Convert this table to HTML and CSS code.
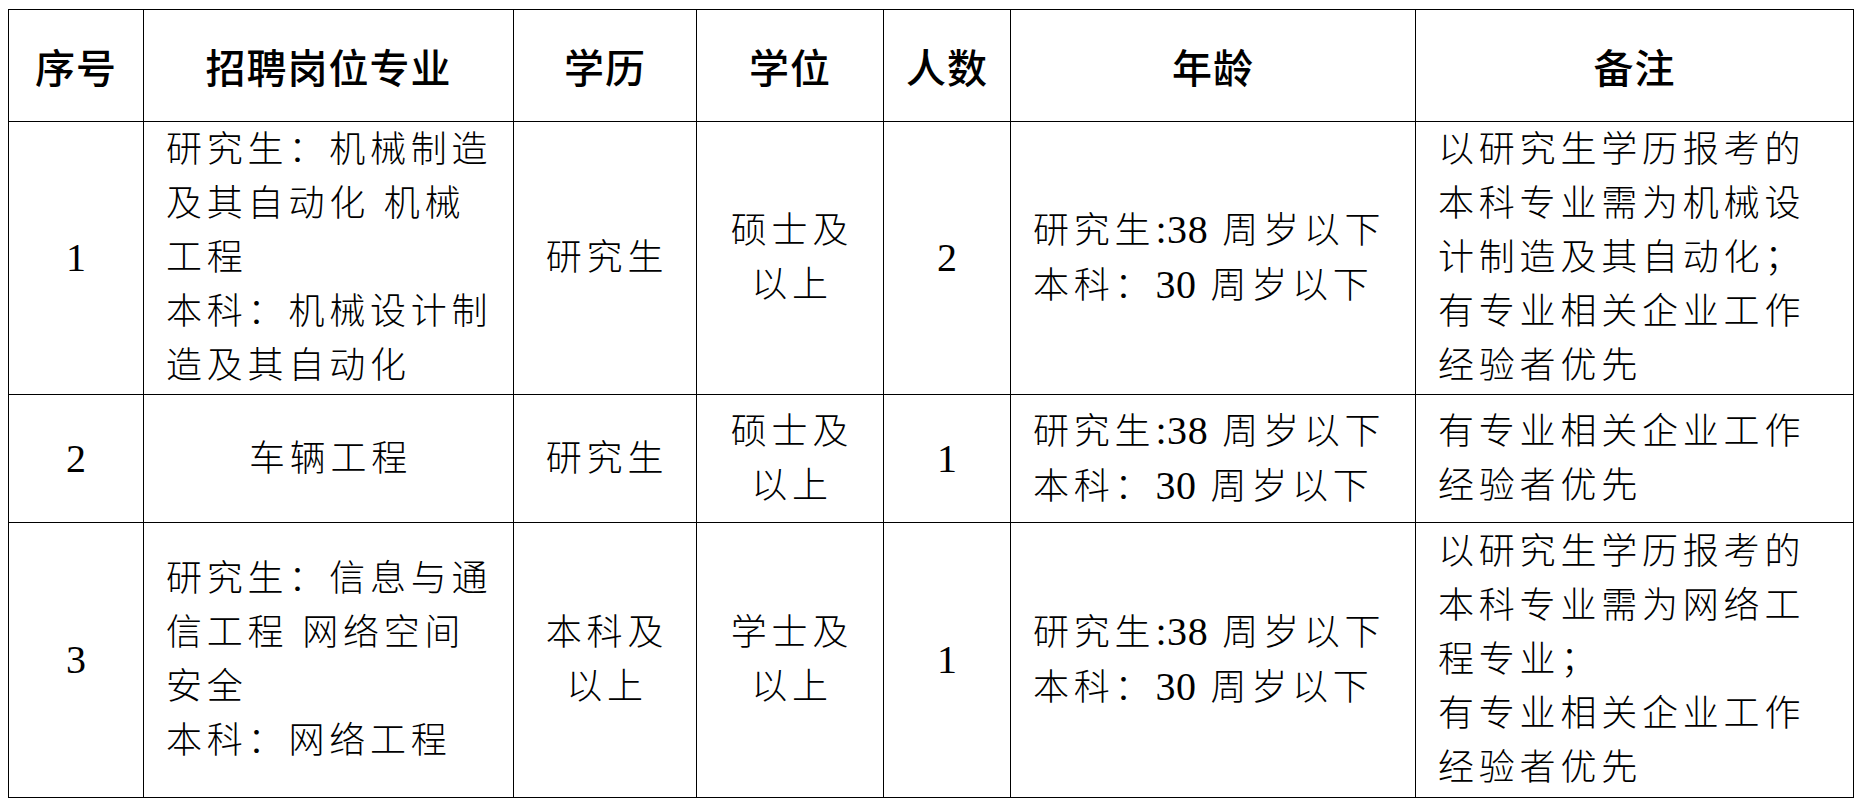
FILE: index.html
```html
<!DOCTYPE html>
<html lang="zh-CN">
<head>
<meta charset="utf-8">
<title>招聘岗位</title>
<link rel="stylesheet" href="styles.css">
</head>
<body>
<table class="grid">
  <colgroup>
    <col class="c1"><col class="c2"><col class="c3"><col class="c4"><col class="c5"><col class="c6"><col class="c7">
  </colgroup>
  <thead>
    <tr class="head">
      <th>序号</th><th>招聘岗位专业</th><th>学历</th><th>学位</th><th>人数</th><th>年龄</th><th>备注</th>
    </tr>
  </thead>
  <tbody>
    <tr class="r1">
      <td class="num">1</td>
      <td class="left">研究生：机械制造<br>及其自动化 机械<br>工程<br>本科：机械设计制<br>造及其自动化</td>
      <td class="center">研究生</td>
      <td class="center">硕士及<br>以上</td>
      <td class="num">2</td>
      <td class="left">研究生<span class="lat">:38</span> 周岁以下<br>本科：<span class="lat">30</span> 周岁以下</td>
      <td class="left">以研究生学历报考的<br>本科专业需为机械设<br>计制造及其自动化；<br>有专业相关企业工作<br>经验者优先</td>
    </tr>
    <tr class="r2">
      <td class="num">2</td>
      <td class="center">车辆工程</td>
      <td class="center">研究生</td>
      <td class="center">硕士及<br>以上</td>
      <td class="num">1</td>
      <td class="left">研究生<span class="lat">:38</span> 周岁以下<br>本科：<span class="lat">30</span> 周岁以下</td>
      <td class="left">有专业相关企业工作<br>经验者优先</td>
    </tr>
    <tr class="r3">
      <td class="num">3</td>
      <td class="left">研究生：信息与通<br>信工程 网络空间<br>安全<br>本科：网络工程</td>
      <td class="center">本科及<br>以上</td>
      <td class="center">学士及<br>以上</td>
      <td class="num">1</td>
      <td class="left">研究生<span class="lat">:38</span> 周岁以下<br>本科：<span class="lat">30</span> 周岁以下</td>
      <td class="left">以研究生学历报考的<br>本科专业需为网络工<br>程专业；<br>有专业相关企业工作<br>经验者优先</td>
    </tr>
  </tbody>
</table>
</body>
</html>
```
FILE: styles.css
```css
html, body {
  margin: 0;
  padding: 0;
  background: #ffffff;
}
body {
  padding: 9px 0 0 8px;
  color: #000;
}
.grid {
  border-collapse: collapse;
  table-layout: fixed;
  width: 1845px;
}
.grid th, .grid td {
  border: 1.5px solid #000;
  padding: 0;
  vertical-align: middle;
  white-space: nowrap;
  overflow: hidden;
}
.c1 { width: 135px; }
.c2 { width: 370px; }
.c3 { width: 183px; }
.c4 { width: 187px; }
.c5 { width: 127px; }
.c6 { width: 405px; }
.c7 { width: 438px; }

.head { height: 112px; }
.r1 { height: 273px; }
.r2 { height: 128px; }
.r3 { height: 275px; }

.grid th {
  font-family: "Noto Sans CJK SC", "Noto Sans", sans-serif;
  font-weight: 500;
  font-size: 40px;
  letter-spacing: 1px;
  text-align: center;
  line-height: 54px;
}
.grid td {
  font-family: "Liberation Serif", "Noto Sans CJK SC", serif;
  font-weight: 300;
  font-size: 36px;
  letter-spacing: 4.8px;
  line-height: 54px;
}
.grid td.num {
  font-size: 40px;
  font-weight: 400;
  letter-spacing: 0;
  text-align: center;
}
.grid td.left {
  text-align: left;
  padding-left: 22px;
}
.grid td.center {
  text-align: center;
  padding-left: 4px;
}
.lat {
  font-family: "Liberation Serif", serif;
  font-size: 40px;
  font-weight: 400;
  letter-spacing: 0.6px;
}
```
